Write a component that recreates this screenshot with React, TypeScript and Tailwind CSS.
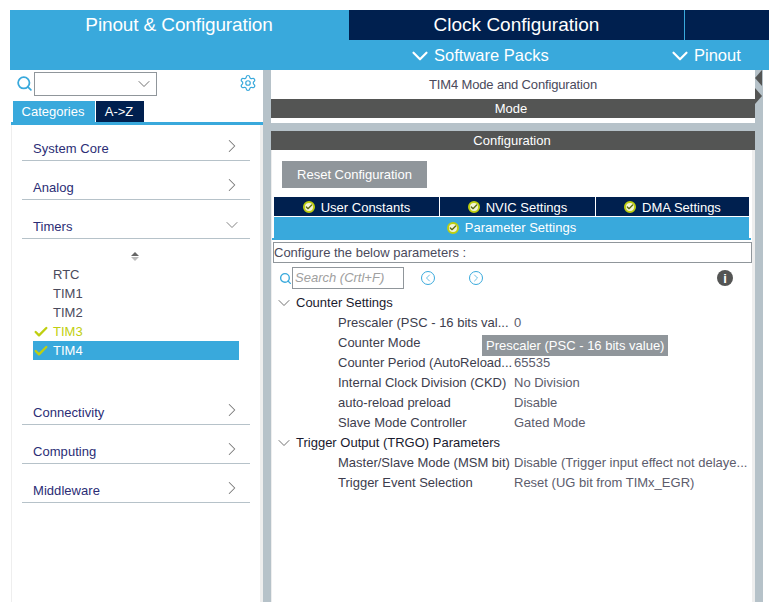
import { ChevronDown, ChevronRight, ChevronLeft, Search, Settings, Check } from "lucide-react";

const font = "font-['Liberation_Sans',Arial,sans-serif]";

function CategoryRow({ label, open }: { label: string; open?: boolean }) {
  return (
    <div className="h-[39px] mx-[10px] border-b border-[#b6c2c9] flex items-end justify-between pl-[11px] pr-[13px] pb-[2px]">
      <span className="text-[13px] leading-[18px] tracking-[0.05px] text-[#2b2d75]">{label}</span>
      {open ? (
        <ChevronDown size={20} strokeWidth={1.1} className="text-[#777] mb-[1px] -mr-[5px]" />
      ) : (
        <ChevronRight size={22} strokeWidth={1.1} className="text-[#777] mb-[1px] -mr-[6px]" />
      )}
    </div>
  );
}

function TimerItem({ label, used, selected }: { label: string; used?: boolean; selected?: boolean }) {
  return (
    <div className={`h-[19px] flex items-center ${selected ? "bg-[#39a9dc] text-white" : used ? "text-[#bfcf10]" : "text-[#4a4a5c]"}`}>
      <span className="w-[16px] mr-[4px] flex justify-center">
        {(used || selected) && <Check size={18} strokeWidth={3.5} className="text-[#bfcf10]" />}
      </span>
      <span className="text-[13px] leading-[19px]">{label}</span>
    </div>
  );
}

function SettingsTab({ label, className }: { label: string; className: string }) {
  return (
    <div className={`flex items-center justify-center gap-[6px] text-white text-[13px] ${className}`}>
      <span className="w-[12px] h-[12px] rounded-full bg-[#f4f4d8] border-2 border-[#bfcf10] flex items-center justify-center">
        <Check size={8} strokeWidth={4} className="text-[#5a6a10]" />
      </span>
      <span className="pt-[1px]">{label}</span>
    </div>
  );
}

function GroupRow({ label }: { label: string }) {
  return (
    <div className="h-[20px] flex items-center pl-[7px] text-[13px] text-[#1a1a2e]">
      <span className="w-[10px] flex justify-center mr-[7px]">
        <ChevronDown size={20} strokeWidth={1} className="text-[#555] shrink-0" />
      </span>
      <span>{label}</span>
    </div>
  );
}

function ParamRow({ label, value }: { label: string; value: string }) {
  return (
    <div className="h-[20px] flex items-center text-[13px] whitespace-nowrap">
      <span className="w-[176px] ml-[66px] text-[#3d3d4d]">{label}</span>
      <span className="text-[#5c5c6c]">{value}</span>
    </div>
  );
}

export default function App() {
  return (
    <div className={`w-[769px] h-[602px] overflow-hidden bg-white pt-[10px] pl-[10px] flex flex-col ${font}`}>
      {/* top bar */}
      <div className="h-[30px] flex bg-[#39a9dc] text-white text-[19px]">
        <div className="w-[338px] flex items-center justify-center tracking-[-0.13px]">Pinout &amp; Configuration</div>
        <div className="w-[335px] ml-[1px] bg-[#00204f] flex items-center justify-center">Clock Configuration</div>
        <div className="flex-1 ml-[1px] bg-[#00204f]" />
      </div>
      <div className="h-[30px] bg-[#39a9dc] text-white text-[16.5px] flex items-center pt-[1px]">
        <div className="ml-[397px] flex items-center w-[260px]">
          <ChevronDown size={26} strokeWidth={2} className="mr-[1px]" />
          <span>Software Packs</span>
        </div>
        <div className="flex items-center">
          <ChevronDown size={26} strokeWidth={2} className="mr-[1px]" />
          <span>Pinout</span>
        </div>
      </div>

      <div className="flex-1 flex min-h-0">
        {/* left panel */}
        <div className="w-[253px] flex flex-col">
          <div className="h-[31px] flex items-start pt-[2px] pl-[6px]">
            <Search size={17} strokeWidth={2.5} className="text-[#39a9dc] mt-[3px]" />
            <div className="ml-[1px] w-[123px] h-[24px] border border-[#90969b] flex items-center justify-end pr-[2px]">
              <ChevronDown size={20} strokeWidth={1} className="text-[#555]" />
            </div>
            <Settings size={18} strokeWidth={1.6} className="text-[#39a9dc] ml-[82px] mt-[2px]" />
          </div>
          <div className="h-[21px] flex pl-[3px] text-[13px] text-white">
            <div className="w-[82px] bg-[#39a9dc] flex items-center justify-center pr-[2px]">Categories</div>
            <div className="w-[48px] ml-[1px] bg-[#00204f] flex items-center justify-center pr-[2px]">A-&gt;Z</div>
          </div>
          <div className="h-[3px] ml-[1px] bg-[#39a9dc]" />
          <div className="flex-1 ml-[1px] border-l border-r-[3px] border-[#eeeeee]">
            <div className="-mt-[3px]">
              <CategoryRow label="System Core" />
              <CategoryRow label="Analog" />
              <CategoryRow label="Timers" open />
              <div className="h-[147px] mx-[10px]">
                <div className="flex flex-col items-center w-[226px] pt-[13px] h-[26px] gap-[1px]">
                  <span className="w-0 h-0 border-x-[4px] border-x-transparent border-b-[4px] border-b-[#666]" />
                  <span className="w-0 h-0 border-x-[4px] border-x-transparent border-t-[4px] border-t-[#bbb]" />
                </div>
                <div className="w-[206px] ml-[11px]">
                  <TimerItem label="RTC" />
                  <TimerItem label="TIM1" />
                  <TimerItem label="TIM2" />
                  <TimerItem label="TIM3" used />
                  <TimerItem label="TIM4" selected />
                </div>
              </div>
              <CategoryRow label="Connectivity" />
              <CategoryRow label="Computing" />
              <CategoryRow label="Middleware" />
            </div>
          </div>
        </div>

        {/* splitter */}
        <div className="w-[8px] bg-[#b6c2c9]" />

        {/* right panel */}
        <div className="w-[484px] flex flex-col">
          <div className="h-[29px] flex items-center justify-center text-[13px] tracking-[-0.15px] text-[#4a4a5c]">TIM4 Mode and Configuration</div>
          <div className="h-[19px] bg-[#545554] text-white text-[13px] flex items-center justify-center pr-[4px]">Mode</div>
          <div className="h-[5px]" />
          <div className="h-[8px] bg-[#b6c2c9]" />
          <div className="h-[19px] bg-[#545554] text-white text-[13px] flex items-center justify-center pr-[2px]">Configuration</div>

          <div className="flex-1 border-l border-r-[3px] border-[#eeeeee]">
            <div className="pt-[11px] pl-[10px]">
              <div className="w-[145px] h-[27px] bg-[#90969b] text-white text-[13px] flex items-center justify-center">Reset Configuration</div>
            </div>
            <div className="mt-[9px] ml-[2px] w-[475px] flex gap-[1px] h-[19px]">
              <SettingsTab label="User Constants" className="w-[165px] pt-[1px] bg-[#00204f]" />
              <SettingsTab label="NVIC Settings" className="w-[155px] pt-[1px] bg-[#00204f]" />
              <SettingsTab label="DMA Settings" className="flex-1 pt-[1px] bg-[#00204f]" />
            </div>
            <SettingsTab label="Parameter Settings" className="mt-[1px] ml-[2px] w-[475px] h-[21px] bg-[#39a9dc]" />
            <div className="h-[2px] w-[479px] bg-[#39a9dc]" />
            <div className="mt-[2px] ml-[1px] w-[479px] h-[21px] border border-[#90969b] flex items-center text-[13px] text-[#4a4a5c]">
              Configure the below parameters :
            </div>

            <div className="mt-[4px] h-[22px] flex items-center pl-[7px]">
              <Search size={13} strokeWidth={2.5} className="text-[#39a9dc]" />
              <div className="w-[112px] h-[22px] border border-[#90969b] flex items-center pl-[2px] text-[13px] italic text-[#a0a0a0]">Search (Crtl+F)</div>
              <ChevronLeft size={14} strokeWidth={1.5} className="text-[#39a9dc] border border-[#39a9dc] rounded-full ml-[17px]" />
              <ChevronRight size={14} strokeWidth={1.5} className="text-[#39a9dc] border border-[#39a9dc] rounded-full ml-[34px]" />
              <span className="ml-[234px] w-[16px] h-[16px] rounded-full bg-[#545554] text-white flex items-center justify-center">
                <span className="text-[13px] font-bold leading-none">i</span>
              </span>
            </div>

            <div className="mt-[4px] relative">
              <GroupRow label="Counter Settings" />
              <ParamRow label="Prescaler (PSC - 16 bits val..." value="0" />
              <ParamRow label="Counter Mode" value="" />
              <ParamRow label="Counter Period (AutoReload..." value="65535" />
              <ParamRow label="Internal Clock Division (CKD)" value="No Division" />
              <ParamRow label="auto-reload preload" value="Disable" />
              <ParamRow label="Slave Mode Controller" value="Gated Mode" />
              <GroupRow label="Trigger Output (TRGO) Parameters" />
              <ParamRow label="Master/Slave Mode (MSM bit)" value="Disable (Trigger input effect not delaye..." />
              <ParamRow label="Trigger Event Selection" value="Reset (UG bit from TIMx_EGR)" />
              <div className="absolute left-[210px] top-[42px] w-[186px] h-[21px] bg-[#90969b] text-white text-[13px] flex items-center pl-[4px] whitespace-nowrap">
                Prescaler (PSC - 16 bits value)
              </div>
            </div>
          </div>
        </div>

        {/* collapse arrows */}
        <div className="w-[8px] bg-[#b6c2c9] flex flex-col gap-[2px]">
          <span className="w-0 h-0 border-y-[8px] border-y-transparent border-r-[7px] border-r-[#545554]" />
          <span className="w-0 h-0 border-y-[8px] border-y-transparent border-l-[7px] border-l-[#545554]" />
        </div>
      </div>
    </div>
  );
}
